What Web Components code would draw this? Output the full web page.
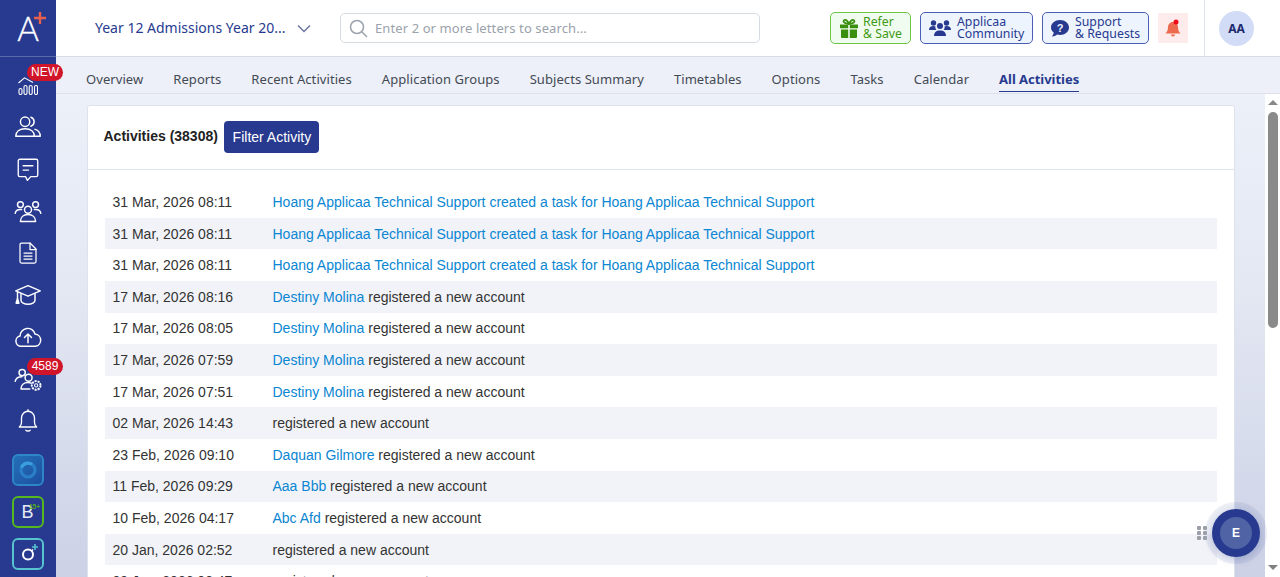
<!DOCTYPE html>
<html lang="en">
<head>
<meta charset="utf-8">
<title>All Activities</title>
<style>
html,body{margin:0;height:100%;overflow:hidden;background:#fff}
</style>
</head>
<body>
<app-shell>
  <side-nav slot="side"></side-nav>
  <top-bar slot="top"></top-bar>
  <tab-bar slot="tabs"></tab-bar>
  <activity-card slot="main" count="38308">
    <activity-row date="31 Mar, 2026 08:11"><a>Hoang Applicaa Technical Support created a task for Hoang Applicaa Technical Support</a></activity-row>
    <activity-row date="31 Mar, 2026 08:11"><a>Hoang Applicaa Technical Support created a task for Hoang Applicaa Technical Support</a></activity-row>
    <activity-row date="31 Mar, 2026 08:11"><a>Hoang Applicaa Technical Support created a task for Hoang Applicaa Technical Support</a></activity-row>
    <activity-row date="17 Mar, 2026 08:16"><a>Destiny Molina</a> registered a new account</activity-row>
    <activity-row date="17 Mar, 2026 08:05"><a>Destiny Molina</a> registered a new account</activity-row>
    <activity-row date="17 Mar, 2026 07:59"><a>Destiny Molina</a> registered a new account</activity-row>
    <activity-row date="17 Mar, 2026 07:51"><a>Destiny Molina</a> registered a new account</activity-row>
    <activity-row date="02 Mar, 2026 14:43">registered a new account</activity-row>
    <activity-row date="23 Feb, 2026 09:10"><a>Daquan Gilmore</a> registered a new account</activity-row>
    <activity-row date="11 Feb, 2026 09:29"><a>Aaa Bbb</a> registered a new account</activity-row>
    <activity-row date="10 Feb, 2026 04:17"><a>Abc Afd</a> registered a new account</activity-row>
    <activity-row date="20 Jan, 2026 02:52">registered a new account</activity-row>
    <activity-row date="09 Jan, 2026 08:47">registered a new account</activity-row>
  </activity-card>
  <fake-scrollbar slot="scroll"></fake-scrollbar>
  <chat-fab slot="fab"></chat-fab>
</app-shell>

<script>
const NAVY = '#273a8f';

const define = (name, html) => customElements.define(name, class extends HTMLElement {
  constructor(){ super(); this.attachShadow({mode:'open'}); }
  connectedCallback(){ this.shadowRoot.innerHTML = typeof html == 'function' ? html(n => this.getAttribute(n)) : html; }
});

define('app-shell', `
<style>
:host{display:grid;grid-template-columns:56px 1fr 15px;grid-template-rows:57px 37px 1fr;height:100vh;overflow:hidden;position:relative;
  font-family:"Noto Sans",sans-serif}
.side{grid-row:1/4;grid-column:1;position:relative;z-index:2}
.top{grid-row:1;grid-column:2/4}
.tabs{grid-row:2;grid-column:2/4}
.main{grid-row:3;grid-column:2;padding:11px 30.5px 0;overflow:hidden;min-height:0;
  background:linear-gradient(180deg,#ecf0f9 0%,#e4e8f3 40%,#ccd1e6 100%)}
.scroll{grid-row:3;grid-column:3;min-height:0}
</style>
<div class="side"><slot name="side"></slot></div>
<div class="top"><slot name="top"></slot></div>
<div class="tabs"><slot name="tabs"></slot></div>
<div class="main"><slot name="main"></slot></div>
<div class="scroll"><slot name="scroll"></slot></div>
<slot name="fab"></slot>`);

// stroke icons share the same 24 box
const sIcon = (w, inner) => `<svg width="${w}" height="${w}" viewBox="0 0 24 24" fill="none" stroke="#fff" stroke-width="1.25" stroke-linecap="round" stroke-linejoin="round">${inner}</svg>`;

define('nav-item', a => `
<style>
:host{display:block;height:42px;position:relative}
.i{height:100%;display:flex;align-items:center;justify-content:center}
.b{position:absolute;left:27px;top:0;height:17px;min-width:36px;border-radius:9px;background:#d0152b;color:#fff;
  font:12px/17px "Liberation Sans",sans-serif;text-align:center}
</style>
<div class="i"><slot></slot></div>
${a('badge') ? `<span class="b">${a('badge')}</span>` : ''}`);

define('side-nav', `
<style>
:host{display:flex;flex-direction:column;height:577px;background:${NAVY};color:#fff}
.logo{height:56px;border-bottom:1px solid #5a6aa8;position:relative;display:flex;justify-content:center;align-items:flex-start}
.a{font:300 33px/33px Lato,sans-serif;-webkit-text-stroke:.35px #fff;margin:12px 0 0 0;color:#fff}
.plus{position:absolute;left:33px;top:11px}
.list{padding-top:7px;display:flex;flex-direction:column}
.apps{display:flex;flex-direction:column;align-items:center;gap:10px;padding-top:12px}
.app{width:32px;height:32px;box-sizing:border-box;border-radius:6px;display:flex;align-items:center;justify-content:center;position:relative}
.o{background:linear-gradient(135deg,#2470b8,#1d4fa0);border:2px solid #2e86c8}
.b{border:2px solid #55b81e}
.p{border:2px solid #56c3cf}
.bt{font:18px/18px "Liberation Sans",sans-serif;color:#e8ecf6;margin:0 1px 0 0}
.sup{position:absolute;right:2px;top:5px;font:bold 6.5px/7px "Liberation Sans",sans-serif;color:#4fa81c}
</style>
<div class="logo">
  <span class="a">A</span>
  <svg class="plus" width="14" height="14" viewBox="0 0 14 14"><path d="M7 1v12M1 7h12" stroke="#e8604c" stroke-width="2.4"/></svg>
</div>
<div class="list">
  <nav-item badge="NEW"><svg style="margin-top:2px" width="20" height="18" viewBox="0 0 20 18" fill="none" stroke="#fff" stroke-width="1.1"><path d="M.5 6 6.500 .8 15 5.500"/><rect x="1" y="11.500" width="3" height="6" rx="1.500"/><rect x="6" y="8.500" width="3" height="9" rx="1.500"/><rect x="11.200" y="8.500" width="3" height="9" rx="1.500"/><rect x="16.500" y="8.500" width="3" height="9" rx="1.500"/></svg></nav-item>
  <nav-item>${sIcon(28,`<circle cx="9.500" cy="7.500" r="4"/><path d="M1.500 20c0-4 3.200-6.500 8-6.500s8 2.500 8 6.500z"/><path d="M14.500 3.700a4 4 0 0 1 0 7.600M18 14c2.800.7 4.500 3 4.500 6h-5"/>`)}</nav-item>
  <nav-item>${sIcon(26,`<path d="M4.500 3h15A1.500 1.500 0 0 1 21 4.500v13a1.500 1.500 0 0 1-1.500 1.500h-5L11.500 22.500 9.700 19H4.500A1.500 1.500 0 0 1 3 17.500v-13A1.500 1.500 0 0 1 4.500 3z"/><path d="M7.500 9h9M7.500 13h5"/>`)}</nav-item>
  <nav-item>${sIcon(28,`<circle cx="5.500" cy="6.500" r="2.500"/><circle cx="18.500" cy="6.500" r="2.500"/><circle cx="12" cy="11" r="3"/><path d="M1 14c.5-2.500 2.500-3.500 5.500-3.200M23 14c-.5-2.500-2.500-3.500-5.500-3.200"/><path d="M5.500 21c0-3.500 2.500-6 6.500-6s6.500 2.500 6.500 6z"/>`)}</nav-item>
  <nav-item>${sIcon(24,`<path d="M6 2h8l6 6v12.500a1.500 1.500 0 0 1-1.500 1.500h-13A1.500 1.500 0 0 1 4 20.500v-17A1.500 1.500 0 0 1 5.500 2z"/><path d="M14 2v6.500h6M8 12h8M8 15h8M8 18h8"/>`)}</nav-item>
  <nav-item>${sIcon(28,`<path d="M12 4 1.500 8.500 12 13l10.500-4.500z"/><path d="M6 11v5.500c0 2 2.800 3.500 6 3.500s6-1.500 6-3.500V11"/><path d="M3 9.500V15"/><path d="M3 15l-1.200 4h2.400z" fill="#fff"/>`)}</nav-item>
  <nav-item>${sIcon(28,`<path d="M7 20H6a4.500 4.500 0 0 1-.8-8.900A6.500 6.500 0 0 1 18 9.500a5.300 5.300 0 0 1 .5 10.500z"/><path d="M12 17v-7M9 12.500 12 9.500l3 3"/>`)}</nav-item>
  <nav-item badge="4589">${sIcon(28,`<circle cx="7" cy="6.500" r="2.700"/><path d="M1 14c.5-2.500 2.700-4 5.800-4"/><circle cx="12.500" cy="11" r="3"/><path d="M6 20.500c0-3.300 2.500-5.500 6-5.500 1 0 2 .2 2.800.6M6 20.500h7.500"/><circle cx="19" cy="17.500" r="3.700" stroke-dasharray="1.800 .8" stroke-width="1.700" stroke-linecap="butt"/><circle cx="19" cy="17.500" r="1.400" stroke-width=".9"/>`)}</nav-item>
  <nav-item>${sIcon(26,`<path d="M12 3a6 6 0 0 0-6 6v4.500c0 1.700-1 3-2 4h16c-1-1-2-2.300-2-4V9a6 6 0 0 0-6-6z"/><path d="M12 1.500V3M10 20.500c.5 1 3.500 1 4 0"/>`)}</nav-item>
</div>
<div class="apps">
  <div class="app o"><svg width="22" height="22" viewBox="0 0 22 22"><circle cx="11" cy="11" r="7" fill="none" stroke="#2a7fc8" stroke-width="3.200"/><path d="M4.500 8.500A7 7 0 0 1 15 5.300" fill="none" stroke="#3a9fdc" stroke-width="3.200"/></svg></div>
  <div class="app b"><span class="bt">B</span><span class="sup">15+</span></div>
  <div class="app p"><svg width="26" height="26" viewBox="0 0 26 26" fill="none"><circle cx="13" cy="13.500" r="5" stroke="#fff" stroke-width="2"/><path d="M16.500 10l1.500-1.500" stroke="#fff" stroke-width="1.500"/><path d="M20 3v6M17 6h6" stroke="#56c3cf" stroke-width="1.600"/></svg></div>
</div>`);

define('tool-button', a => `
<style>
:host{display:flex;align-items:center;box-sizing:border-box;height:32px;border-radius:5px;border:1px solid var(--bd);background:var(--bg);color:var(--fg);
  padding-left:8px;gap:var(--gap,6px);font:12.3px/12px "Noto Sans",sans-serif;flex:none}
.t{display:block}
</style>
<slot></slot><span class="t">${a('line1')}<br>${a('line2')}</span>`);

define('top-bar', `
<style>
:host{display:flex;align-items:center;box-sizing:border-box;height:57px;background:#fff;border-bottom:1px solid #d7dce8;padding-left:39px;position:relative}
.year{font:14px/20px "Noto Sans",sans-serif;color:${NAVY};width:191px;white-space:nowrap}
.chev{margin:0 29px 0 11px;display:block}
.search{width:420px;height:30px;box-sizing:border-box;border:1px solid #d6dce2;border-radius:5px;display:flex;align-items:center;padding-left:8px;gap:7px;margin-right:70px;
  font:13px/18px "Noto Sans",sans-serif;color:#9aa2ac;flex:none;letter-spacing:.1px}
.tools{display:flex;gap:9px;align-items:center}
.bell{width:30px;height:30px;background:#fdeceb;display:flex;align-items:center;justify-content:center;flex:none}
.div{position:absolute;left:1148px;top:0;bottom:0;width:1px;background:#dfe3ec}
.av{position:absolute;left:1163px;top:11px;width:35px;height:35px;border-radius:50%;background:#d2dcf6;color:#1d2a6e;
  font:bold 12px/35px "Noto Sans",sans-serif;text-align:center}
</style>
<span class="year">Year 12 Admissions Year 20...</span>
<svg class="chev" width="14" height="9" viewBox="0 0 14 9" fill="none"><path d="M1 1.500 7 7.500l6-6" stroke="#6b779f" stroke-width="1.500"/></svg>
<div class="search">
  <svg width="19" height="19" viewBox="0 0 19 19" fill="none" stroke="#9aa2ac" stroke-width="1.500"><circle cx="8" cy="8" r="6.500"/><path d="M12.800 12.800 18 18"/></svg>
  <span>Enter 2 or more letters to search...</span>
</div>
<div class="tools">
  <tool-button style="--bd:#6cc644;--bg:#f1fcf1;--fg:#3f9a14;--gap:5px;width:81px" line1="Refer" line2="&amp; Save">
    <svg width="18" height="19" viewBox="0 0 18 19" fill="#3a8f0e" style="flex:none;margin-left:1px"><path d="M0 5.500h8.200v3.700H0zM9.800 5.500H18v3.700H9.800zM1 10.500h7.200V19H2a1 1 0 0 1-1-1zM9.800 10.500H17V18a1 1 0 0 1-1 1H9.800z"/><path d="M9 5C7.500 1.500 6 .6 4.500 1 2.800 1.500 3 4.600 9 5zM9 5c1.500-3.500 3-4.400 4.500-4C15.200 1.500 15 4.600 9 5z" fill="none" stroke="#3a8f0e" stroke-width="1.700"/></svg>
  </tool-button>
  <tool-button style="--bd:#4a5fb3;--bg:#eef4fe;--fg:${NAVY};width:113px" line1="Applicaa" line2="Community">
    <svg width="22" height="18" viewBox="0 0 22 18" fill="${NAVY}" style="flex:none"><circle cx="4.500" cy="4" r="2.700"/><circle cx="17.500" cy="4" r="2.700"/><circle cx="11" cy="7" r="3"/><path d="M0 11c0-2.500 1.500-4 4.500-4 1 0 1.500.2 2 .5-.5 1.500.5 3 1 3.500H0zM22 11c0-2.500-1.500-4-4.500-4-1 0-1.500.2-2 .5.500 1.500-.5 3-1 3.500h7.500zM5 17c0-3.500 2-5.500 6-5.500s6 2 6 5.500z"/></svg>
  </tool-button>
  <tool-button style="--bd:#4a5fb3;--bg:#eef4fe;--fg:${NAVY};width:107px" line1="Support" line2="&amp; Requests">
    <svg width="18" height="18" viewBox="0 0 18 18" style="flex:none"><path d="M9 1c5 0 9 3.200 9 7.500S14 16 9 16c-1 0-2-.1-2.800-.4C5 16.800 3 17.500 .8 17.500 2 16.300 2.600 15 2.700 13.600 1 12.300 0 10.500 0 8.500 0 4.200 4 1 9 1z" fill="${NAVY}"/><text x="9" y="13" text-anchor="middle" font-family="Liberation Sans" font-weight="bold" font-size="11" fill="#eef4fe">?</text></svg>
  </tool-button>
  <div class="bell">
    <svg width="20" height="20" viewBox="0 0 20 20"><path d="M10 4a5 5 0 0 0-5 5c0 3.500-1 5-2.500 6.500h15C16 14 15 12.500 15 9a5 5 0 0 0-5-5zM8 16.500h4a2 2 0 0 1-4 0z" fill="#ee6a4f"/><circle cx="13" cy="4" r="2.500" fill="#f40b1a"/></svg>
  </div>
</div>
<div class="div"></div>
<div class="av">AA</div>`);

define('tab-bar', `
<style>
:host{display:flex;align-items:flex-end;box-sizing:border-box;height:37px;background:#edf0f8;border-bottom:1px solid #dde1eb;padding:0 0 5px 30px;gap:30px;
  font:13px/18px "Noto Sans",sans-serif;color:#434a54;letter-spacing:.07px}
span{white-space:nowrap;display:block}
.on{font-weight:700;color:${NAVY};position:relative;letter-spacing:-.03px}
.on::after{content:"";position:absolute;left:0;right:0;bottom:-4px;height:1.500px;background:${NAVY}}
</style>
<span>Overview</span><span>Reports</span><span>Recent Activities</span><span>Application Groups</span><span>Subjects Summary</span><span>Timetables</span><span>Options</span><span>Tasks</span><span>Calendar</span><span class="on">All Activities</span>`);

define('activity-card', a => `
<style>
:host{display:block;box-sizing:border-box;background:#fff;border:1px solid #dde3ec;border-radius:3px 3px 0 0;font-family:"Liberation Sans",sans-serif;color:#333}
.h{height:64px;box-sizing:border-box;border-bottom:1px solid #dfe4ea;display:flex;align-items:center;padding:0 16px 2px;gap:6.500px}
b{font-size:14px;color:#222;margin-bottom:2px}
button{height:32px;width:95px;padding:0;border:0;border-radius:4px;background:${NAVY};color:#fff;font:14px "Liberation Sans",sans-serif}
.b{padding:16.200px 17px 0}
</style>
<div class="h"><b>Activities (${a('count')})</b><button>Filter Activity</button></div>
<div class="b"><slot></slot></div>`);

define('activity-row', a => `
<style>
:host{display:flex;align-items:center;height:31.6px;font:14px/20px "Liberation Sans",sans-serif;color:#333}
:host(:nth-child(even)){background:#f2f3f8}
.d{width:168px;padding-left:8px;box-sizing:border-box;flex:none}
::slotted(a){color:#0a86d2}
</style>
<span class="d">${a('date')}</span><span><slot></slot></span>`);

define('fake-scrollbar', `
<style>
:host{display:flex;flex-direction:column;align-items:center;height:100%;background:#fff;position:relative}
.up{margin-top:6px;width:0;height:0;border:5px solid transparent;border-top:0;border-bottom:5px solid #888}
.th{margin-top:7px;width:10px;height:216px;border-radius:5px;background:#8a8a8a}
.dn{position:absolute;bottom:7px;width:0;height:0;border:5px solid transparent;border-bottom:0;border-top:5px solid #808080}
</style>
<div class="up"></div><div class="th"></div><div class="dn"></div>`);

define('chat-fab', `
<style>
:host{position:absolute;right:20px;bottom:20px;width:48px;height:48px;border-radius:50%;background:${NAVY};
  box-shadow:0 0 0 7px rgba(39,58,143,.08),0 2px 8px rgba(39,58,143,.25);display:flex;align-items:center;justify-content:center;z-index:3}
.in{width:32px;height:32px;border-radius:50%;background:#4f63a5;color:#fff;font:bold 12px/32px "Liberation Sans",sans-serif;text-align:center}
.grip{position:absolute;left:-15px;top:17px;display:grid;grid-template-columns:4px 4px;gap:1px 2px}
.grip i{width:4px;height:4px;background:#9ba0a8;border-radius:1px;display:block}
</style>
<div class="grip"><i></i><i></i><i></i><i></i><i></i><i></i></div>
<div class="in">E</div>`);
</script>
</body>
</html>
